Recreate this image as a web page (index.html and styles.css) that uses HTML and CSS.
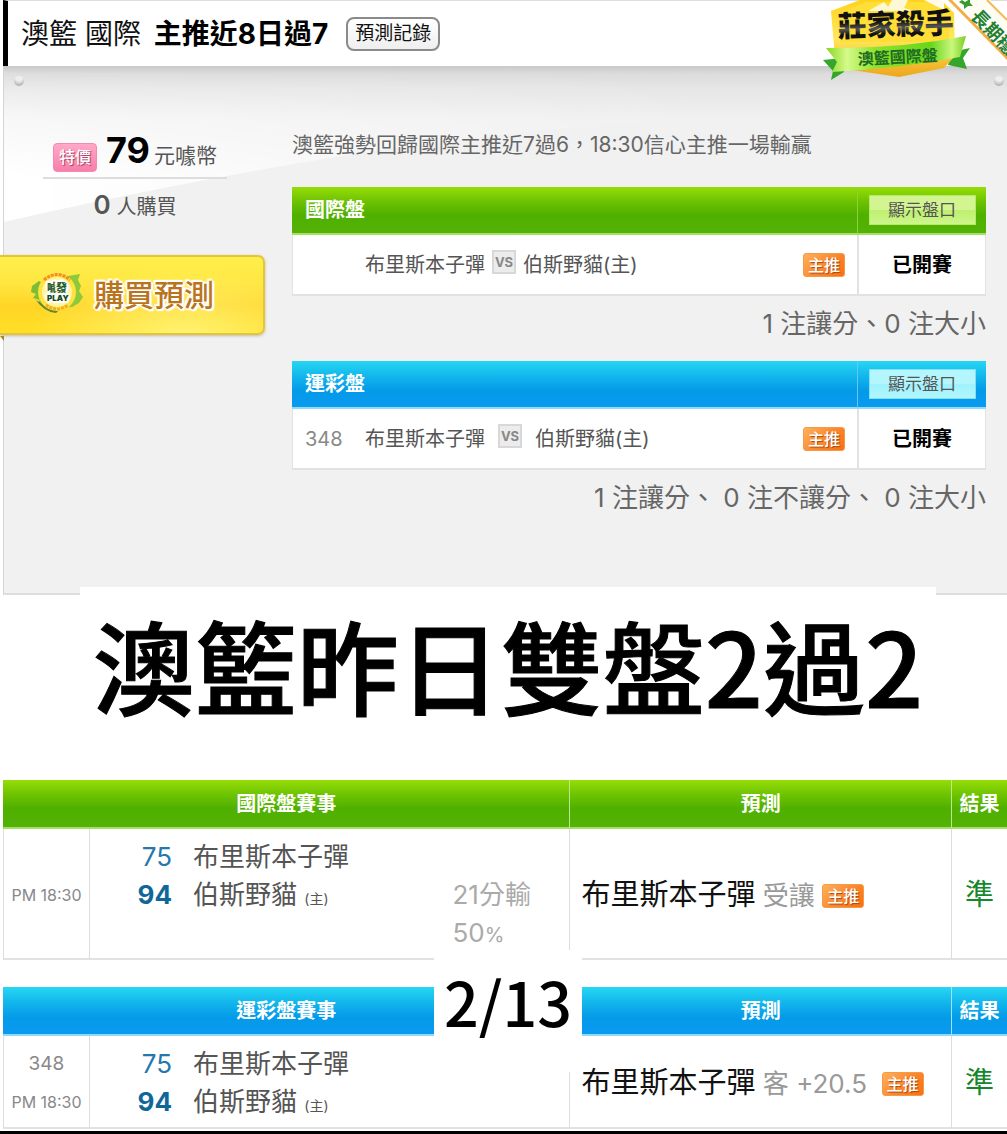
FILE: index.html
```html
<!DOCTYPE html>
<html lang="zh-Hant">
<head>
    <meta charset="UTF-8">
    <meta name="viewport" content="width=device-width, initial-scale=1">
    <title>澳籃 國際 主推近8日過7</title>
    <link rel="stylesheet" href="styles.css">
</head>
<body>
    <main class="page">
        <header class="title-bar">
            <h1 class="title">澳籃 國際 <strong>主推近8日過7</strong></h1>
            <button type="button" class="record-btn">預測記錄</button>
        </header>

        <!-- medal and corner ribbon -->
        <svg class="medal" width="187" height="84" viewBox="820 0 187 84" aria-hidden="true">
            <defs>
                <linearGradient id="gold" x1="0" y1="0" x2="0" y2="1">
                    <stop offset="0" stop-color="#ffd21c"/>
                    <stop offset="0.5" stop-color="#ffe95a"/>
                    <stop offset="1" stop-color="#eda51b"/>
                </linearGradient>
                <linearGradient id="band" x1="0" y1="0" x2="1" y2="0">
                    <stop offset="0" stop-color="#86d81c"/>
                    <stop offset="0.15" stop-color="#d5fa8a"/>
                    <stop offset="0.35" stop-color="#8fe32c"/>
                    <stop offset="0.75" stop-color="#69d51d"/>
                    <stop offset="0.9" stop-color="#c9f87c"/>
                    <stop offset="1" stop-color="#79cf22"/>
                </linearGradient>
                <linearGradient id="ink" x1="0" y1="0" x2="0" y2="1">
                    <stop offset="0.4" stop-color="#111"/>
                    <stop offset="0.6" stop-color="#555"/>
                    <stop offset="0.75" stop-color="#111"/>
                </linearGradient>
            </defs>
            <path d="M823 60L842 58L844 72L831 80L833 71Z" fill="#35a52c"/>
            <path d="M952 52L970 48L963 58L967 69L948 65Z" fill="#35a52c"/>
            <path d="M831 11L860 0H944L954 11L955 56L944 68L899 77L852 70L835 58Z" fill="url(#gold)"/>
            <path d="M838 14L866 2H940L949 14V42H840Z" fill="#ffdf37"/>
            <path d="M868 11L884 2L888 7L892 0H908L904 8L914 11Z" fill="#fff8d5"/>
            <path d="M924 0L944 10V0Z" fill="#fffbe8"/>
            <path d="M826 48Q900 49 966 36L960 57Q900 68 832 72L837 62Z" fill="url(#band)"/>
            <text class="medal-name" x="838" y="37" transform="rotate(-2 838 37)">莊家殺手</text>
            <text class="medal-type" x="858" y="65" transform="rotate(-3 858 65)">澳籃國際盤</text>
            <path d="M941 0H990L1007 17V66Z" fill="#fff"/>
            <path d="M948 0H952L1007 56V60Z" fill="#f4ad43"/>
            <path d="M956 0L1007 52V20L987 0Z" fill="#fffdf2"/>
            <path d="M987 0L1007 20" stroke="#f2b957" stroke-width="2"/>
            <path d="M962 0L965 2L970 -1L970 3L973 6L968 6L964 9L964 5L959 2Z" fill="#379b2f"/>
            <text class="ribbon-text" x="970" y="17" transform="rotate(46 970 17)">長期穩</text>
        </svg>

        <section class="panel">
            <svg class="panel-shine" viewBox="0 0 1004 160" preserveAspectRatio="none" aria-hidden="true">
                <defs>
                    <linearGradient id="shine" x1="0" y1="0" x2="0.85" y2="0">
                        <stop offset="0" stop-color="#fff"/>
                        <stop offset="0.4" stop-color="#fff" stop-opacity="0.6"/>
                        <stop offset="1" stop-color="#fff" stop-opacity="0"/>
                    </linearGradient>
                    <linearGradient id="shade" x1="0" y1="0" x2="0" y2="1">
                        <stop offset="0" stop-color="#000"/>
                        <stop offset="0.7" stop-color="#fff"/>
                    </linearGradient>
                    <mask id="fade"><rect width="1004" height="160" fill="url(#shade)"/></mask>
                </defs>
                <path d="M0 156Q120 128 290 98Q560 50 900 46V0H0Z" fill="url(#shine)" mask="url(#fade)"/>
            </svg>
            <span class="rivet rivet-left"></span>
            <span class="rivet rivet-right"></span>

            <aside class="buy">
                <p class="price"><span class="sale">特價</span><strong>79</strong>元噱幣</p>
                <p class="count"><b>0</b> 人購買</p>
                <button type="button" class="buy-btn">
                    <svg class="coin" width="54" height="42" viewBox="0 0 54 42" aria-hidden="true">
                        <path d="M2 14L9 9L15 12V34L8 31L10 28L3 26L6 22L1 20Z" fill="#7bbd36"/>
                        <path d="M38 4L50 2L48 8L51 14L49 19L53 25L49 31L42 35H31Z" fill="#8cc93b"/>
                        <path d="M6 28Q17 36 31 36L26 41Q14 40 6 28Z" fill="#62882f"/>
                        <circle cx="27" cy="20" r="19" fill="#ffe33c"/>
                        <circle cx="27" cy="20" r="15" fill="#fff3a4"/>
                        <path d="M14 8Q27 -3 40 8" fill="none" stroke="#f58b28" stroke-width="3" stroke-dasharray="3 1"/>
                        <path d="M16 33Q27 41 38 33" fill="none" stroke="#f0ae25" stroke-width="3" stroke-dasharray="3 1"/>
                        <text class="coin-top" x="17" y="20">噱</text>
                        <text class="coin-top" x="26" y="20">發</text>
                        <text class="coin-play" x="17" y="29">PLAY</text>
                    </svg>
                    <span>購買預測</span>
                </button>
            </aside>

            <div class="picks">
                <p class="intro">澳籃強勢回歸國際主推近7過6，18:30信心主推一場輸贏</p>

                <table class="pick-table green">
                    <colgroup><col class="col-code"><col><col class="col-status"></colgroup>
                    <thead>
                        <tr>
                            <th colspan="2">國際盤</th>
                            <th class="status"><button type="button" class="odds-btn">顯示盤口</button></th>
                        </tr>
                    </thead>
                    <tbody>
                        <tr>
                            <td class="code"></td>
                            <td>
                                <div class="match">
                                    <span>布里斯本子彈</span><span class="vs">VS</span><span>伯斯野貓(主)</span>
                                    <span class="tag">主推</span>
                                </div>
                            </td>
                            <td class="status">已開賽</td>
                        </tr>
                    </tbody>
                </table>
                <p class="summary">1 注讓分、0 注大小</p>

                <table class="pick-table blue">
                    <colgroup><col class="col-code"><col><col class="col-status"></colgroup>
                    <thead>
                        <tr>
                            <th colspan="2">運彩盤</th>
                            <th class="status"><button type="button" class="odds-btn">顯示盤口</button></th>
                        </tr>
                    </thead>
                    <tbody>
                        <tr>
                            <td class="code">348</td>
                            <td>
                                <div class="match wide">
                                    <span>布里斯本子彈</span><span class="vs">VS</span><span>伯斯野貓(主)</span>
                                    <span class="tag">主推</span>
                                </div>
                            </td>
                            <td class="status">已開賽</td>
                        </tr>
                    </tbody>
                </table>
                <p class="summary">1 注讓分、 0 注不讓分、 0 注大小</p>
            </div>
        </section>

        <h2 class="banner">澳籃昨日雙盤2過2</h2>

        <section class="results">
            <table class="result-table green">
                <colgroup><col class="col-time"><col><col class="col-pick"><col class="col-result"></colgroup>
                <thead>
                    <tr><th colspan="2">國際盤賽事</th><th>預測</th><th>結果</th></tr>
                </thead>
                <tbody>
                    <tr>
                        <td class="time">PM 18:30</td>
                        <td>
                            <div class="game">
                                <span class="score">75</span><span>布里斯本子彈</span><span></span>
                                <span class="score win">94</span><span>伯斯野貓 <small>(主)</small></span><span class="margin">21分輸<br>50<small>%</small></span>
                            </div>
                        </td>
                        <td class="pick"><strong>布里斯本子彈</strong> 受讓 <span class="tag">主推</span></td>
                        <td class="hit">準</td>
                    </tr>
                </tbody>
            </table>

            <table class="result-table blue">
                <colgroup><col class="col-time"><col><col class="col-pick"><col class="col-result"></colgroup>
                <thead>
                    <tr><th colspan="2">運彩盤賽事</th><th>預測</th><th>結果</th></tr>
                </thead>
                <tbody>
                    <tr>
                        <td class="time"><span class="game-no">348</span>PM 18:30</td>
                        <td>
                            <div class="game">
                                <span class="score">75</span><span>布里斯本子彈</span><span></span>
                                <span class="score win">94</span><span>伯斯野貓 <small>(主)</small></span><span></span>
                            </div>
                        </td>
                        <td class="pick"><strong>布里斯本子彈</strong> 客 +20.5 &nbsp;<span class="tag">主推</span></td>
                        <td class="hit">準</td>
                    </tr>
                </tbody>
            </table>
            <p class="date">2/13</p>
        </section>
    </main>
</body>
</html>
```

FILE: styles.css
```css
* {
    box-sizing: border-box;
}
body {
    margin: 0;
    background: #fff;
    color: #555;
    font-family: Inter, "Noto Sans CJK TC", sans-serif;
    font-size: 20px;
    line-height: 38px;
}
h1, h2, p {
    margin: 0;
}
button {
    font-family: inherit;
    cursor: pointer;
}
table {
    width: 100%;
    border-collapse: separate;
    border-spacing: 0;
    table-layout: fixed;
}
.page {
    position: relative;
    padding: 0 0 2px 3px;
    border-bottom: 3px solid #000;
    overflow: hidden;
}

/* title */
.title-bar {
    display: flex;
    align-items: center;
    gap: 18px;
    height: 66px;
    padding-left: 13px;
    border-top: 1px solid #ddd;
    border-left: 5px solid #000;
}
.title {
    color: #111;
    font-size: 28px;
    font-weight: 400;
}
.title strong {
    margin-left: 5px;
    color: #000;
}
.record-btn {
    height: 34px;
    padding: 0 7px;
    border: 2px solid #8a8a8a;
    border-radius: 8px;
    background: linear-gradient(#fff, #efefef);
    color: #111;
    font-size: 19px;
    line-height: 28px;
}
.medal {
    position: absolute;
    top: 0;
    right: 0;
    z-index: 1;
}
.medal-name {
    font-size: 29px;
    font-weight: 900;
    fill: url(#ink);
}
.medal-type {
    font-size: 16px;
    font-weight: 700;
    fill: #1d6b22;
}
.ribbon-text {
    font-size: 18px;
    font-weight: 700;
    fill: #248034;
}

/* panel */
.panel {
    position: relative;
    display: flex;
    min-height: 529px;
    border-left: 1px solid #d5d5d5;
    border-bottom: 2px solid #ddd;
    background: linear-gradient(#c9c9c9, #dcdcdc 8px, #e6e6e6 22px, #f1f1f1 54px, #f1f1f1);
}
.panel-shine {
    position: absolute;
    top: 0;
    left: 0;
    width: 100%;
    height: 160px;
}
.rivet {
    position: absolute;
    top: 10px;
    width: 10px;
    height: 10px;
    border-radius: 50%;
    background: radial-gradient(circle at 50% 15%, #eee 35%, #999);
}
.rivet-left {
    left: 10px;
}
.rivet-right {
    right: 3px;
}
.buy {
    position: relative;
    flex: 0 0 288px;
    padding-top: 65px;
}
.price, .count {
    width: 184px;
    margin-left: 39px;
    text-align: center;
}
.price {
    display: flex;
    align-items: baseline;
    justify-content: center;
    height: 48px;
    border-bottom: 2px solid #ddd;
    font-size: 21px;
    white-space: nowrap;
}
.price strong {
    margin: 0 4px 0 9px;
    color: #000;
    font-size: 36px;
}
.sale {
    padding: 0 5px;
    border: 1px solid #f28bb0;
    border-radius: 4px;
    background: linear-gradient(#ffa9c8, #f77fa9);
    color: #fff;
    font-size: 16px;
    font-weight: 500;
    line-height: 27px;
    text-shadow: 1px 1px 1px #a33a62;
}
.count {
    margin-top: 7px;
}
.count b {
    font-size: 26px;
    font-weight: 600;
}
.buy-btn {
    display: flex;
    align-items: center;
    gap: 10px;
    width: 265px;
    height: 80px;
    margin: 29px 0 0 -4px;
    padding: 0 0 4px 30px;
    border: 2px solid #e5c536;
    border-left: 0;
    border-radius: 0 7px 7px 0;
    background: radial-gradient(ellipse at 70% 100%, rgba(255, 255, 160, 0.6), rgba(255, 255, 120, 0) 60%), linear-gradient(#fff04c, #ffe640 35%, #ffd526 65%, #ffdf25);
    box-shadow: 0 1px 3px #bbb;
    color: #ba741b;
    font-size: 30px;
    font-weight: 500;
    text-shadow: 2px 0 1px #fff, -2px 0 1px #fff, 0 2px 1px #fff, 0 -2px 1px #fff, 2px 2px 1px #fff, -2px -2px 1px #fff;
}
.buy-btn::after {
    content: "";
    position: absolute;
    left: -4px;
    top: 270px;
    border-top: 5px solid #a98722;
    border-left: 4px solid transparent;
}
.coin-top {
    font-size: 11px;
    font-weight: 900;
    fill: #285e2d;
}
.coin-play {
    font-size: 8px;
    font-weight: 900;
    fill: #174b22;
}

/* picks */
.picks {
    position: relative;
    flex: 1;
    min-width: 0;
    padding: 60px 21px 0 0;
}
.intro {
    margin-bottom: 23px;
    color: #666;
    font-size: 21px;
}
.green th {
    border-bottom: 2px solid #a6df65;
    background: linear-gradient(#96dc08, #6fc402 30%, #50b000 60%, #53b206);
}
.blue th {
    border-bottom: 2px solid #8fdcf8;
    background: linear-gradient(#26d7f2, #12b4ec 35%, #049ae8 65%, #0a9af0);
}
.col-code {
    width: 73px;
}
.col-status {
    width: 129px;
}
.pick-table th {
    height: 48px;
    padding: 0 13px;
    color: #fff;
    font-weight: 700;
    text-align: left;
}
.pick-table td {
    height: 61px;
    padding: 0;
    border-bottom: 2px solid #e2e2e2;
    background: #fff;
}
.pick-table .code {
    padding-left: 12px;
    border-left: 1px solid #e2e2e2;
    color: #888;
}
.pick-table .status {
    padding: 0;
    border-left: 2px solid #e2e2e2;
    text-align: center;
}
.pick-table td.status {
    border-right: 1px solid #e2e2e2;
    color: #000;
    font-weight: 700;
}
.pick-table.green th.status {
    border-left: 1px solid #8bd33b;
}
.pick-table.blue th.status {
    border-left: 1px solid #62c9f4;
}
.odds-btn {
    display: block;
    width: 107px;
    height: 30px;
    margin: 0 auto;
    padding: 0;
    border: 1px solid #b4ec6a;
    background: linear-gradient(#d2f592 50%, #bdf06c 50%, #cdf68c);
    color: #555;
    font-size: 17px;
    line-height: 26px;
}
.blue .odds-btn {
    border-color: #7fe0f8;
    background: linear-gradient(#b4f6fd 50%, #9ff2fd 50%, #b0f6fe);
}
.match {
    display: flex;
    align-items: center;
    gap: 7px;
    white-space: nowrap;
}
.match.wide {
    gap: 13px;
}
.match .tag {
    margin: 0 12px 0 auto;
}
.vs {
    width: 24px;
    height: 24px;
    margin-bottom: 6px;
    border: 2px solid #d8d8d8;
    background: #ececec;
    color: #888;
    font-size: 13px;
    font-weight: 700;
    line-height: 20px;
    text-align: center;
}
.tag {
    display: inline-block;
    padding: 0 4px;
    border: 1px solid #f59a45;
    border-radius: 3px;
    background: linear-gradient(135deg, #ffb05a, #fb8a32 50%, #fa6f12);
    color: #fff;
    font-size: 16px;
    font-weight: 500;
    line-height: 22px;
    text-shadow: 1px 1px 1px #a04a10;
}
.summary {
    padding: 9px 0 18px;
    color: #666;
    font-size: 26px;
    text-align: right;
}

/* banner */
.banner {
    position: relative;
    width: 856px;
    max-width: 100%;
    margin: -8px auto 0 77px;
    padding-bottom: 39px;
    background: #fff;
    color: #000;
    font-family: "Noto Sans CJK TC", sans-serif;
    font-size: 102px;
    font-weight: 500;
    line-height: 154px;
    text-align: center;
    white-space: nowrap;
    -webkit-text-stroke: 1px #000;
}

/* results */
.results {
    position: relative;
}
.col-time {
    width: 86px;
}
.col-pick {
    width: 38%;
}
.col-result {
    width: 56px;
}
.result-table + .result-table {
    margin-top: 27px;
}
.result-table th {
    height: 49px;
    padding: 0;
    color: #fff;
    font-weight: 700;
}
.result-table th + th {
    border-left: 1px solid #b9e98a;
}
.result-table.blue th + th {
    border-left-color: #9fe2fa;
}
.result-table td {
    padding: 9px 0 6px;
    border-left: 1px solid #ddd;
    border-bottom: 2px solid #e2e2e2;
}
.result-table .time {
    color: #888;
    font-size: 16px;
    text-align: center;
}
.game-no {
    display: block;
    font-size: 19px;
}
.game {
    display: grid;
    grid-template-columns: 82px 1fr 117px;
    grid-auto-rows: minmax(38px, auto);
    font-size: 26px;
}
.game small {
    font-size: 14px;
    line-height: 1;
}
.score {
    color: #2478ad;
    text-align: right;
}
.score.win {
    color: #0f6799;
    font-weight: 700;
}
.game .score + span {
    padding-left: 21px;
}
.margin {
    color: #aaa;
}
.game .margin small {
    font-size: 20px;
}
.result-table .pick {
    padding-left: 11px;
    color: #999;
    font-size: 26px;
    line-height: 36px;
    white-space: nowrap;
}
.pick strong {
    color: #111;
    font-size: 29px;
    font-weight: 400;
}
.pick .tag {
    vertical-align: 3px;
}
.result-table .hit {
    color: #16872a;
    font-size: 29px;
    text-align: center;
}
.date {
    position: absolute;
    left: 431px;
    top: 170px;
    width: 148px;
    padding-bottom: 20px;
    background: #fff;
    color: #000;
    font-family: "Noto Sans CJK TC", sans-serif;
    font-size: 61px;
    font-weight: 500;
    line-height: 102px;
    text-align: center;
}
```
